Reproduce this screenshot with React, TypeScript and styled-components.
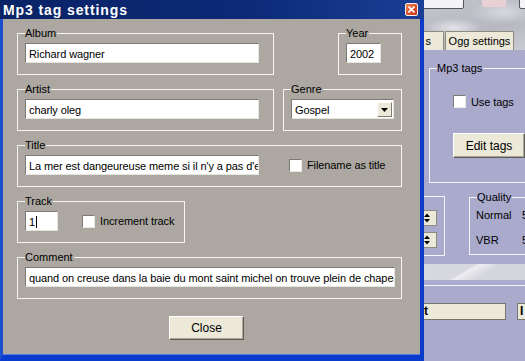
import React from 'react';
import styled, { createGlobalStyle } from 'styled-components';

const GlobalStyle = createGlobalStyle`
  html, body {
    margin: 0;
    padding: 0;
    background: #aaaacd;
  }
  body {
    font-family: "Liberation Sans", Arial, sans-serif;
    font-size: 11px;
    color: #000;
  }
`;

const Screen = styled.div`
  display: flex;
  width: 525px;
  height: 361px;
  overflow: hidden;
`;

const Dialog = styled.div`
  flex: 0 0 424px;
  display: flex;
  flex-direction: column;
  box-sizing: border-box;
  height: 361px;
  background: #aca8a1;
  border-left: 3px solid #1c4fd0;
  border-right: 4px solid #0b3bc9;
  border-bottom: 6px solid #0a3bd0;
  box-shadow: inset 0 -1px 0 #5a7de0;
`;

const TitleBar = styled.div`
  height: 19px;
  flex: none;
  margin-left: -3px;
  margin-right: -4px;
  display: flex;
  align-items: center;
  justify-content: space-between;
  padding: 0 6px 0 3px;
  background: linear-gradient(to right, #0a2366 0%, #0c2a78 60%, #1b3f97 100%);
`;

const TitleText = styled.span`
  color: #fff;
  font-weight: bold;
  font-size: 14px;
  letter-spacing: 0.9px;
`;

const CloseBox = styled.div`
  width: 13px;
  height: 13px;
  box-sizing: border-box;
  border: 1px solid #f4f0ec;
  border-radius: 2px;
  background: linear-gradient(135deg, #f08a5c 0%, #dc4a24 60%, #c8391a 100%);
  display: flex;
  align-items: center;
  justify-content: center;
`;

const Client = styled.div`
  flex: 1;
  display: flex;
  flex-direction: column;
  gap: 14px;
  padding: 14px 18px 0 14px;
`;

const Row = styled.div`
  display: flex;
  justify-content: space-between;
  align-items: flex-start;
`;

const Group = styled.div<{ $w?: number }>`
  position: relative;
  box-sizing: border-box;
  width: ${(p) => (p.$w ? `${p.$w}px` : '100%')};
  height: 42px;
  padding: 9px 6px 11px 7px;
  border: 1px solid #f6f5f2;
  display: flex;
  align-items: flex-start;
`;

const Caption = styled.span<{ $bg?: string }>`
  position: absolute;
  top: -7px;
  left: 7px;
  padding: 0 1px 0 0;
  line-height: 13px;
  font-size: 11px;
  background: ${(p) => p.$bg || '#aca8a1'};
`;

const Field = styled.div<{ $w: number }>`
  box-sizing: border-box;
  width: ${(p) => p.$w}px;
  height: 20px;
  flex: none;
  background: #fff;
  border-top: 1px solid #7c7a74;
  border-left: 1px solid #7c7a74;
  border-right: 1px solid #e6e4df;
  border-bottom: 1px solid #e6e4df;
  padding: 1px 2px 0 3px;
  font-size: 11px;
  letter-spacing: -0.1px;
  white-space: nowrap;
  overflow: hidden;
  display: flex;
  align-items: center;
`;

const Caret = styled.span`
  display: inline-block;
  width: 1px;
  height: 12px;
  margin-left: 1px;
  background: #000;
`;

const Select = styled(Field)`
  padding-right: 1px;
  justify-content: space-between;
`;

const DropButton = styled.span`
  width: 15px;
  height: 15px;
  box-sizing: border-box;
  background: #ece9d8;
  border: 1px solid;
  border-color: #fff #7c7a74 #7c7a74 #fff;
  display: flex;
  align-items: center;
  justify-content: center;
`;

const Check = styled.label<{ $gap: number }>`
  display: flex;
  align-items: center;
  align-self: center;
  gap: 5px;
  margin-left: ${(p) => p.$gap}px;
  font-size: 11px;
  letter-spacing: -0.1px;
  white-space: nowrap;
`;

const Box = styled.span`
  width: 13px;
  height: 13px;
  flex: none;
  box-sizing: border-box;
  background: #fff;
  border-top: 1px solid #7c7a74;
  border-left: 1px solid #7c7a74;
  border-right: 1px solid #ece9e2;
  border-bottom: 1px solid #ece9e2;
`;

const Footer = styled.div`
  display: flex;
  justify-content: center;
  padding: 3px 6px 0 0;
`;

const PushButton = styled.button<{ $w: number }>`
  width: ${(p) => p.$w}px;
  height: 24px;
  flex: none;
  background: #ece9d8;
  border: 1px solid;
  border-color: #fff #5f5d58 #5f5d58 #fff;
  box-shadow: inset -1px -1px 0 #a9a699;
  font-family: inherit;
  font-size: 12px;
  color: #000;
  padding: 0;
`;

/* the main window behind the dialog */
const Parent = styled.div`
  flex: 1;
  overflow: hidden;
  background: #aaaacd;
`;

const ParentInner = styled.div`
  width: 230px;
  display: flex;
  flex-direction: column;
`;

const Banner = styled.div`
  height: 50px;
  position: relative;
  display: flex;
  align-items: flex-end;
  background:
    radial-gradient(ellipse 40px 14px at 30px 28px, #e4e4ea 0%, transparent 70%),
    radial-gradient(ellipse 50px 18px at 80px 12px, #d8d8df 0%, transparent 70%),
    linear-gradient(160deg, #c4c4cc 0%, #b7b7c1 40%, #cfcfd6 70%, #b9b9c3 100%);
`;

const TopButton = styled.div<{ $w: number; $bg: string }>`
  position: absolute;
  top: -4px;
  height: 11px;
  width: ${(p) => p.$w}px;
  background: ${(p) => p.$bg};
  border: 1px solid #55555c;
  border-radius: 2px;
`;

const Tabs = styled.div`
  display: flex;
  gap: 1px;
  align-items: flex-end;
`;

const Tab = styled.div<{ $w: number }>`
  width: ${(p) => p.$w}px;
  height: 19px;
  box-sizing: border-box;
  background: #ece9d8;
  border: 1px solid #8d8b80;
  border-bottom: none;
  font-size: 11px;
  display: flex;
  align-items: center;
  justify-content: center;
  overflow: hidden;
  white-space: nowrap;
`;

const CutTab = styled(Tab)`
  justify-content: flex-end;
  padding-right: 12px;
  border-left: none;
`;

const Panel = styled.div`
  display: flex;
  flex-direction: column;
`;

const PGroup = styled.div<{ $w: number; $h: number }>`
  position: relative;
  box-sizing: border-box;
  width: ${(p) => p.$w}px;
  height: ${(p) => p.$h}px;
  border: 1px solid #f3f3f8;
  display: flex;
  flex-direction: column;
  align-items: flex-start;
`;

const MpGroup = styled(PGroup)`
  margin: 18px 0 0 5px;
  padding: 26px 0 0 23px;
`;

const QualityRow = styled.div`
  display: flex;
  gap: 24px;
  margin-top: 13px;
`;

const SpinGroup = styled(PGroup)`
  border-left: none;
  gap: 6px;
  padding-top: 13px;
`;

const Spin = styled.div`
  width: 12px;
  height: 14px;
  background: #ece9d8;
  border: 1px solid #8d8b80;
  border-left: none;
  display: flex;
  align-items: center;
`;

const QualityGrid = styled.div`
  display: grid;
  grid-template-columns: 46px auto;
  row-gap: 11px;
  padding: 10px 0 0 6px;
  font-size: 11px;
  line-height: 14px;
`;

const Strip = styled.div`
  height: 16px;
  margin-top: 8px;
  background:
    linear-gradient(150deg, transparent 0 20%, #eeeef2 22%, transparent 30% 55%, #f0f0f4 58%, transparent 64%),
    linear-gradient(to right, #d8d8e0, #cfcfd8);
`;

const Rule = styled.div`
  height: 1px;
  margin-top: 5px;
  background: #f2f2f7;
`;

const Bars = styled.div`
  display: flex;
  gap: 11px;
  margin-top: 17px;
`;

const Bar = styled.div<{ $w: number }>`
  width: ${(p) => p.$w}px;
  height: 17px;
  box-sizing: border-box;
  background: #ece9d8;
  border: 1px solid #77756d;
  border-left: none;
  font-weight: bold;
  font-size: 12px;
  line-height: 15px;
  padding-left: 0;
`;

const Arrow = () => (
  <svg width="7" height="4" viewBox="0 0 7 4">
    <path d="M0 0h7L3.5 4z" fill="#000" />
  </svg>
);

const SpinArrows = () => (
  <svg width="6" height="10" viewBox="0 0 6 10">
    <path d="M0 4L3 0.5L6 4zM0 6h6L3 9.5z" fill="#000" />
  </svg>
);

export default function App() {
  return (
    <Screen>
      <GlobalStyle />
      <Dialog>
        <TitleBar>
          <TitleText>Mp3 tag settings</TitleText>
          <CloseBox>
            <svg width="7" height="7" viewBox="0 0 7 7">
              <path d="M0.5 0.5L6.5 6.5M6.5 0.5L0.5 6.5" stroke="#fff" strokeWidth="1.6" />
            </svg>
          </CloseBox>
        </TitleBar>
        <Client>
          <Row>
            <Group $w={257}>
              <Caption>Album</Caption>
              <Field $w={234}>Richard wagner</Field>
            </Group>
            <Group $w={64}>
              <Caption>Year</Caption>
              <Field $w={35}>2002</Field>
            </Group>
          </Row>
          <Row>
            <Group $w={257}>
              <Caption>Artist</Caption>
              <Field $w={234}>charly oleg</Field>
            </Group>
            <Group $w={119}>
              <Caption>Genre</Caption>
              <Select $w={103}>
                Gospel
                <DropButton>
                  <Arrow />
                </DropButton>
              </Select>
            </Group>
          </Row>
          <Group>
            <Caption>Title</Caption>
            <Field $w={234}>La mer est dangeureuse meme si il n'y a pas d'eau</Field>
            <Check $gap={30}>
              <Box />
              Filename as title
            </Check>
          </Group>
          <Row>
            <Group $w={168}>
              <Caption>Track</Caption>
              <Field $w={33}>
                1<Caret />
              </Field>
              <Check $gap={24}>
                <Box />
                Increment track
              </Check>
            </Group>
          </Row>
          <Group>
            <Caption>Comment</Caption>
            <Field $w={370}>
              quand on creuse dans la baie du mont saint michel on trouve plein de chapeaux
            </Field>
          </Group>
          <Footer>
            <PushButton $w={75}>Close</PushButton>
          </Footer>
        </Client>
      </Dialog>

      <Parent>
        <ParentInner>
          <Banner>
            <TopButton $w={40} $bg="#f4f4f6" style={{ left: -2 }} />
            <TopButton $w={24} $bg="#e8d0d4" style={{ left: 58, border: 'none' }} />
            <TopButton $w={20} $bg="#f4f4f6" style={{ left: 95 }} />
            <Tabs>
              <CutTab $w={20}>s</CutTab>
              <Tab $w={69}>Ogg settings</Tab>
            </Tabs>
          </Banner>
          <Panel>
            <MpGroup $w={180} $h={115}>
              <Caption $bg="#aaaacd">Mp3 tags</Caption>
              <Check $gap={0} style={{ alignSelf: 'flex-start' }}>
                <Box />
                Use tags
              </Check>
              <PushButton $w={72} style={{ marginTop: 25, height: 25 }}>
                Edit tags
              </PushButton>
            </MpGroup>
            <QualityRow>
              <SpinGroup $w={21} $h={60}>
                <Spin>
                  <SpinArrows />
                </Spin>
                <Spin>
                  <SpinArrows />
                </Spin>
              </SpinGroup>
              <PGroup $w={140} $h={58} style={{ marginTop: 1 }}>
                <Caption $bg="#aaaacd">Quality</Caption>
                <QualityGrid>
                  <span>Normal</span>
                  <span>5</span>
                  <span>VBR</span>
                  <span>5</span>
                </QualityGrid>
              </PGroup>
            </QualityRow>
            <Strip />
            <Rule />
            <Bars>
              <Bar $w={82}>t</Bar>
              <Bar $w={40} style={{ borderLeft: '1px solid #77756d', paddingLeft: 2 }}>
                I
              </Bar>
            </Bars>
          </Panel>
        </ParentInner>
      </Parent>
    </Screen>
  );
}
